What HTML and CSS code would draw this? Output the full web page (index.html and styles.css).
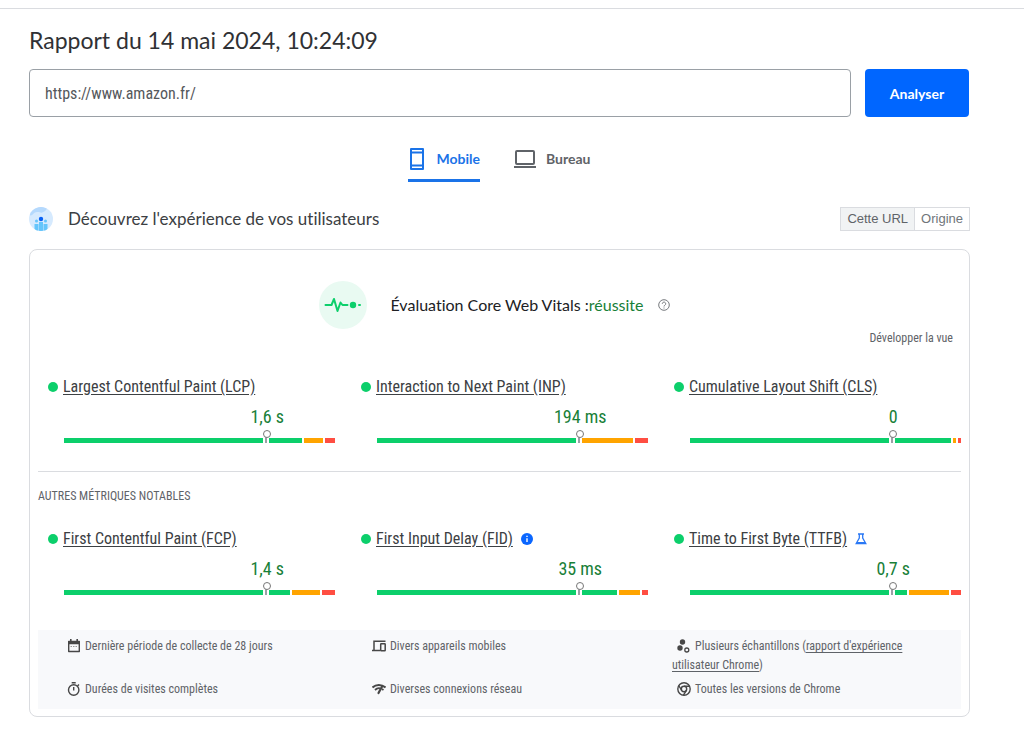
FILE: index.html
```html
<!DOCTYPE html>
<html lang="fr">
<head>
<meta charset="utf-8">
<title>Rapport</title>
<link rel="stylesheet" href="styles.css">
</head>
<body>
<main class="page">
  <h1 class="title">Rapport du 14 mai 2024, 10:24:09</h1>
  <form class="search">
    <input class="url" type="text" aria-label="URL" value="https://www.amazon.fr/">
    <button class="analyze" type="button">Analyser</button>
  </form>
  <div class="tabs" role="tablist">
    <button class="tab active" type="button" role="tab" aria-selected="true">
      <svg width="18" height="24" viewBox="0 0 18 24"><path d="M3 2h12v20H3zM3 5.5h12M3 18.5h12" fill="none" stroke="currentColor" stroke-width="2" stroke-linejoin="round"/></svg>
      <span>Mobile</span>
    </button>
    <button class="tab" type="button" role="tab" aria-selected="false">
      <svg width="22" height="24" viewBox="0 0 22 24"><rect x="2" y="4" width="18" height="13" rx="1" fill="none" stroke="currentColor" stroke-width="2"/><path d="M0 20h22" stroke="currentColor" stroke-width="2"/></svg>
      <span>Bureau</span>
    </button>
  </div>
  <div class="section-head">
    <svg class="users" width="24" height="24" viewBox="0 0 24 24"><defs><clipPath id="disc"><circle cx="12" cy="12" r="12"/></clipPath></defs><g clip-path="url(#disc)"><rect width="24" height="24" fill="#d6eafe"/><path d="M0 8C4 10 4 5 8 5s4 2 8-1 1-4-4-4S0 0 0 8z" fill="#b5d9fd"/><g fill="#64c5fb"><rect x="5.500" y="17" width="4" height="7"/><rect x="10" y="15" width="4" height="9"/><rect x="14.500" y="17" width="4" height="7"/><circle cx="7.500" cy="14" r="1.500"/><circle cx="16.500" cy="14" r="1.500"/></g><circle cx="12" cy="12" r="2.200" fill="#0a62f5"/></g></svg>
    <h2>Découvrez l'expérience de vos utilisateurs</h2>
    <div class="toggle"><button class="selected" type="button">Cette URL</button><button type="button">Origine</button></div>
  </div>
  <section class="card">
    <div class="assessment">
      <svg width="48" height="48" viewBox="0 0 48 48"><circle cx="24" cy="24" r="24" fill="#e9faf2"/><path d="M6.500 24h6l2.500-6 3.500 12 3-8.500 2 2.500h5" fill="none" stroke="#0ccf6b" stroke-width="2" stroke-linecap="round" stroke-linejoin="round"/><circle cx="34" cy="24" r="3.200" fill="#0ccf6b"/><path d="M40 24h1" stroke="#0ccf6b" stroke-width="2" stroke-linecap="round"/></svg>
      <p class="verdict">Évaluation Core Web Vitals :<span>réussite</span></p>
      <svg class="help" width="12" height="12" viewBox="0 0 12 12" fill="none" stroke="#777a7e"><circle cx="6" cy="6" r="5.300"/><path d="M4.300 4.800a1.700 1.700 0 1 1 2.600 1.400c-.6.4-.9.600-.9 1.300M6 8.500v1"/></svg>
    </div>
    <button class="expand" type="button">Développer la vue</button>
    <div class="metrics">
      <article class="metric"><h3><a href="#lcp">Largest Contentful Paint (LCP)</a></h3><p class="value">1,6 s</p><div class="bar"><i class="good" style="flex-grow:238"></i><i class="mid" style="flex-grow:19"></i><i class="bad" style="flex-grow:10"></i><b class="pin"></b></div></article>
      <article class="metric"><h3><a href="#inp">Interaction to Next Paint (INP)</a></h3><p class="value">194 ms</p><div class="bar"><i class="good" style="flex-grow:204"></i><i class="mid" style="flex-grow:51"></i><i class="bad" style="flex-grow:13"></i><b class="pin"></b></div></article>
      <article class="metric"><h3><a href="#cls">Cumulative Layout Shift (CLS)</a></h3><p class="value">0</p><div class="bar"><i class="good" style="flex-grow:262"></i><i class="mid" style="flex-grow:3"></i><i class="bad" style="flex-grow:3"></i><b class="pin"></b></div></article>
    </div>
    <h3 class="others">AUTRES MÉTRIQUES NOTABLES</h3>
    <div class="metrics">
      <article class="metric"><h3><a href="#fcp">First Contentful Paint (FCP)</a></h3><p class="value">1,4 s</p><div class="bar"><i class="good" style="flex-grow:226"></i><i class="mid" style="flex-grow:28"></i><i class="bad" style="flex-grow:13"></i><b class="pin"></b></div></article>
      <article class="metric"><h3><a href="#fid">First Input Delay (FID)</a><svg width="12" height="12" viewBox="0 0 12 12"><circle cx="6" cy="6" r="6" fill="#0a66ff"/><path d="M6 5.200V9M6 2.800v1.300" stroke="#fff" stroke-width="1.400"/></svg></h3><p class="value">35 ms</p><div class="bar"><i class="good" style="flex-grow:241"></i><i class="mid" style="flex-grow:21"></i><i class="bad" style="flex-grow:6"></i><b class="pin"></b></div></article>
      <article class="metric"><h3><a href="#ttfb">Time to First Byte (TTFB)</a><svg width="12" height="12" viewBox="0 0 12 12"><path d="M3 1h6M4.300 1.500V5L1.200 10.500h9.600L7.700 5V1.500" fill="none" stroke="#2a78f5" stroke-width="1.300"/><path d="M1 11l1.200-2h7.600L11 11z" fill="#2a78f5"/></svg></h3><p class="value">0,7 s</p><div class="bar"><i class="good" style="flex-grow:218"></i><i class="mid" style="flex-grow:40"></i><i class="bad" style="flex-grow:10"></i><b class="pin"></b></div></article>
    </div>
    <ul class="facts">
      <li><svg width="14" height="14" viewBox="0 0 14 14"><path d="M1.700 2.500h10.600v10H1.700z" fill="none" stroke="#474747" stroke-width="1.400" stroke-linejoin="round"/><path d="M1 2h12v3.200H1zM3 0h1.600v3H3zM9.400 0H11v3H9.400z" fill="#474747"/><path d="M3.500 7.500h7" stroke="#999" stroke-dasharray="1.500 1"/></svg>Dernière période de collecte de 28 jours</li>
      <li><svg width="14" height="14" viewBox="0 0 14 14"><path d="M13.500 2.200H2v8.500M0 11.500h8" fill="none" stroke="#474747" stroke-width="1.500"/><rect x="8.700" y="4.700" width="4.500" height="7" rx=".5" fill="none" stroke="#474747" stroke-width="1.500"/></svg>Divers appareils mobiles</li>
      <li><svg width="14" height="14" viewBox="0 0 14 14"><g fill="#474747"><circle cx="5.500" cy="3" r="2.700"/><circle cx="3" cy="9" r="2.700"/></g><circle cx="9.800" cy="11" r="2" fill="none" stroke="#474747" stroke-width="1.300"/></svg>Plusieurs échantillons (<a href="#crux">rapport d'expérience utilisateur Chrome</a>)</li>
      <li><svg width="14" height="14" viewBox="0 0 14 14" fill="none" stroke="#474747" stroke-width="1.400"><circle cx="6.700" cy="8" r="5.200"/><path d="M4.700.8h4M6.700 5v3.500M10.500 4l1.500-1.500"/></svg>Durées de visites complètes</li>
      <li><svg width="14" height="14" viewBox="0 0 14 14" fill="none" stroke="#474747"><path d="M.5 5.500C4 2.200 9.500 2.200 13.500 5.500" stroke-width="2"/><path d="M3 8C4.500 6.500 6.500 6 8 6.300M10 7l1.500 1" stroke-width="1.800"/><path d="M10.200 4.200L6.500 11" stroke-width="2.200" stroke-linecap="round"/></svg>Diverses connexions réseau</li>
      <li><svg width="14" height="14" viewBox="0 0 14 14" fill="none" stroke="#474747" stroke-width="1.400"><circle cx="7" cy="7" r="6.200"/><circle cx="7" cy="7" r="2.700"/><path d="M7 4.300h5.800M4.700 8.400L1.700 3.500M9.300 8.400L6.500 13.200"/></svg>Toutes les versions de Chrome</li>
    </ul>
  </section>
</main>
</body>
</html>
```
FILE: styles.css
```css
* { box-sizing: border-box; }
body {
  --condensed: "Roboto Condensed", "Liberation Sans Narrow", Roboto, sans-serif;
  --display: Lato, sans-serif;
  margin: 0;
  background: #fff;
  color: #3c4043;
  font-family: var(--condensed);
  font-variant-ligatures: none;
}
h1, h2, h3, p, ul { margin: 0; padding: 0; font-weight: 400; }
button { font: inherit; color: inherit; background: none; border: 0; padding: 0; }
svg { flex: none; }
.page { margin-top: 8px; padding: 15px 54px 12px 29px; border-top: 1px solid #dadce0; }
.title { font-family: var(--display); font-size: 23px; line-height: 32px; color: #303134; }
.search { display: flex; gap: 14px; margin-top: 13px; padding-right: 1px; }
.url {
  flex: 1;
  min-width: 0;
  height: 48px;
  padding: 0 15px;
  border: 1px solid #9aa0a6;
  border-radius: 4px;
  font: 16px var(--condensed);
  color: #55585c;
}
.analyze { width: 104px; border-radius: 4px; background: #06f; color: #fff; font: 700 14px var(--display); }
.tabs { display: flex; justify-content: center; gap: 34px; margin-top: 30px; color: #5f6368; font-family: var(--display); font-size: 14px; font-weight: 700; line-height: 24px; }
.tab { display: flex; align-items: center; gap: 10px; padding-bottom: 8px; border-bottom: 3px solid transparent; }
.tab.active { color: #1a73e8; border-color: #1a73e8; }
.section-head { display: flex; align-items: center; margin-top: 25px; }
.section-head h2 { flex: 1; margin-left: 15px; font-family: var(--display); font-size: 17px; line-height: 24px; color: #3c4043; }
.toggle { display: flex; border: 1px solid #dadce0; font: 13px/22px "Liberation Sans", Arial, sans-serif; color: #70757a; }
.toggle button { padding: 0 6px; }
.toggle .selected { background: #f1f3f4; border-right: 1px solid #dadce0; color: #5f6368; }
.card { display: flex; flex-direction: column; margin-top: 18px; padding: 31px 8px 7px; border: 1px solid #dadce0; border-radius: 8px; }
.assessment { display: flex; align-items: center; justify-content: center; padding-right: 10px; }
.verdict { margin-left: 23px; font-family: var(--display); font-size: 16px; line-height: 24px; color: #202124; }
.verdict span { color: #188038; }
.help { margin-left: 14px; }
.expand { align-self: flex-end; margin-right: 8px; font-size: 12px; line-height: 18px; color: #5f6368; }
.metrics { display: grid; grid-template-columns: repeat(3, 1fr); gap: 26px; padding-left: 10px; }
.expand + .metrics { margin-top: 30px; padding-bottom: 28px; }
.metric { padding-left: 16px; }
.metric h3 { display: flex; align-items: center; gap: 8px; margin-left: -16px; font-size: 16px; line-height: 20px; }
.metric h3::before { content: ""; flex: none; width: 10px; height: 10px; margin-right: -3px; border-radius: 50%; background: #0ccf6b; }
.metric a { color: inherit; text-underline-offset: 2px; }
.value { padding-left: 50%; text-align: center; margin-top: 9px; font-size: 18px; line-height: 22px; color: #188038; }
.bar { position: relative; display: flex; gap: 2px; height: 5px; margin-top: 10px; }
.bar i { flex-basis: 0; }
.good { background: #0ccf6b; }
.mid { background: #ffa400; }
.bad { background: #ff4e42; }
.pin { position: absolute; left: 75%; bottom: 0; width: 6px; height: 13px; margin-left: -4px; }
.pin::before { content: ""; position: absolute; left: 0; bottom: 0; width: 6px; height: 8px; background: linear-gradient(90deg, #fff 2px, #9aa0a6 2px 4px, #fff 4px); }
.pin::after { content: ""; position: absolute; left: 0; top: 0; width: 6px; height: 6px; border: 1px solid #777; border-radius: 50%; background: #fff; }
.others { border-top: 1px solid #dadce0; padding-top: 15px; font-size: 12px; line-height: 18px; color: #5f6368; }
.others + .metrics { margin-top: 24px; }
.facts {
  display: grid;
  grid-template-columns: repeat(3, 1fr);
  column-gap: 29px;
  row-gap: 5px;
  margin-top: 35px;
  padding: 7px 13px 10px 24px;
  list-style: none;
  background: #f8f9fb;
  font-size: 12px;
  line-height: 19px;
  color: #5f6368;
}
.facts svg { vertical-align: text-bottom; margin: 0 4px 0 5px; }
.facts a { color: inherit; text-underline-offset: 2px; }
```
